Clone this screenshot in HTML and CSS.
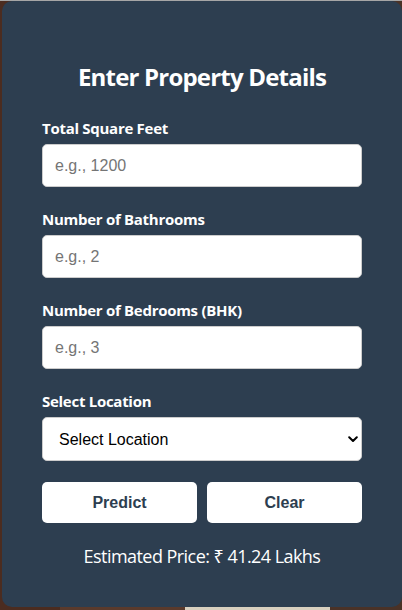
FILE: index.html
```html
<!DOCTYPE html>
<html lang="en">
<head>
<meta charset="utf-8">
<title>House Price Prediction</title>
<link rel="stylesheet" href="styles.css">
</head>
<body>
<div class="card">
  <h2 class="title">Enter Property Details</h2>
  <form class="form">
    <div class="field">
      <label class="label" for="sqft">Total Square Feet</label>
      <input class="input" id="sqft" type="text" placeholder="e.g., 1200">
    </div>
    <div class="field">
      <label class="label" for="bath">Number of Bathrooms</label>
      <input class="input" id="bath" type="text" placeholder="e.g., 2">
    </div>
    <div class="field">
      <label class="label" for="bhk">Number of Bedrooms (BHK)</label>
      <input class="input" id="bhk" type="text" placeholder="e.g., 3">
    </div>
    <div class="field">
      <label class="label" for="loc">Select Location</label>
      <div class="select-wrap">
        <select class="select" id="loc">
          <option>Select Location</option>
        </select>
        <svg class="chevron" width="10" height="7" viewBox="0 0 10 7"><path d="M1.2 1.2 L5 5 L8.8 1.2" fill="none" stroke="#000" stroke-width="2" stroke-linecap="round" stroke-linejoin="round"/></svg>
      </div>
    </div>
    <div class="buttons">
      <button type="button" class="btn">Predict</button>
      <button type="button" class="btn">Clear</button>
    </div>
  </form>
  <p class="result">Estimated Price: ₹ 41.24 Lakhs</p>
</div>
</body>
</html>
```
FILE: styles.css
```css
html, body {
  margin: 0;
  padding: 0;
}
body {
  width: 402px;
  height: 610px;
  overflow: hidden;
  background:
    linear-gradient(to bottom, #a6a6a6 0 1px, transparent 1px),
    linear-gradient(to right, #4b2c20 0 60px, #5a3a2c 60px 185px, #d8d0bf 185px 330px, #4a3227 330px);
}
.card {
  box-sizing: border-box;
  width: 400px;
  height: 606px;
  margin: 1px 0 0 2px;
  padding: 60px 40px 0;
  background: #2d3e50;
  border-radius: 10px;
  color: #fff;
  font-family: "Open Sans", "Noto Sans", sans-serif;
}
.title {
  margin: 0;
  font-size: 24px;
  line-height: 32px;
  font-weight: 700;
  letter-spacing: -0.8px;
  text-align: center;
}
.form {
  display: flex;
  flex-direction: column;
  margin-top: 25px;
}
.field {
  display: flex;
  flex-direction: column;
  gap: 6px;
  margin-bottom: 22px;
}
.label {
  font-size: 15px;
  line-height: 20px;
  font-weight: 700;
  letter-spacing: -0.28px;
}
.input, .select {
  box-sizing: border-box;
  width: 100%;
  height: 43px;
  margin: 0;
  border: 1px solid #ccc;
  border-radius: 5px;
  background: #fff;
  font-family: "Liberation Sans", Arial, sans-serif;
  font-size: 16px;
  color: #000;
  outline: none;
}
.input {
  padding: 0 12px;
}
.input::placeholder {
  color: #757575;
}
.select-wrap {
  position: relative;
}
.select {
  height: 44px;
  padding: 0 16px;
  appearance: none;
  -webkit-appearance: none;
}
.chevron {
  position: absolute;
  right: 4px;
  top: 19px;
}
.buttons {
  display: grid;
  grid-template-columns: 1fr 1fr;
  gap: 10px;
  margin-top: -1px;
}
.btn {
  height: 41px;
  border: none;
  border-radius: 5px;
  background: #fff;
  color: #2d3e50;
  font-family: "Liberation Sans", Arial, sans-serif;
  font-size: 16px;
  font-weight: 700;
}
.result {
  margin: 21px 0 0;
  font-size: 18px;
  line-height: 24px;
  letter-spacing: -0.55px;
  text-align: center;
}
```
